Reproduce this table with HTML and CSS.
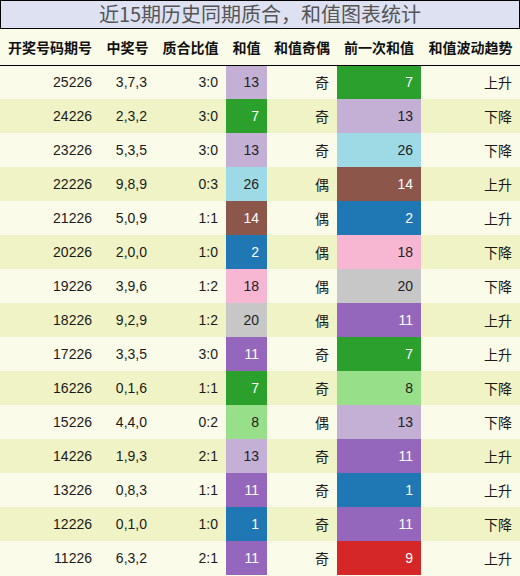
FILE: index.html
```html
<!DOCTYPE html>
<html lang="zh">

<head>
  <meta charset="UTF-8">
  <meta name="viewport" content="width=device-width, initial-scale=1.0">
  <title>和值图表统计</title>
  <link rel="stylesheet" href="styles.css">
</head>

<body>

  <div class="chart">
    <h2 class="chart-title">近15期历史同期质合，和值图表统计</h2>

    <table class="stats">
      <colgroup>
        <col class="w-issue">
        <col class="w-nums">
        <col class="w-ratio">
        <col class="w-sum">
        <col class="w-odd">
        <col class="w-prev">
        <col class="w-trend">
      </colgroup>
      <thead>
        <tr>
          <th>开奖号码期号</th>
          <th>中奖号</th>
          <th>质合比值</th>
          <th>和值</th>
          <th>和值奇偶</th>
          <th>前一次和值</th>
          <th>和值波动趋势</th>
        </tr>
      </thead>
      <tbody>
        <tr><td>25226</td><td>3,7,3</td><td>3:0</td><td class="c-lavender">13</td><td>奇</td><td class="c-green">7</td><td>上升</td></tr>
        <tr><td>24226</td><td>2,3,2</td><td>3:0</td><td class="c-green">7</td><td>奇</td><td class="c-lavender">13</td><td>下降</td></tr>
        <tr><td>23226</td><td>5,3,5</td><td>3:0</td><td class="c-lavender">13</td><td>奇</td><td class="c-sky">26</td><td>下降</td></tr>
        <tr><td>22226</td><td>9,8,9</td><td>0:3</td><td class="c-sky">26</td><td>偶</td><td class="c-brown">14</td><td>上升</td></tr>
        <tr><td>21226</td><td>5,0,9</td><td>1:1</td><td class="c-brown">14</td><td>偶</td><td class="c-blue">2</td><td>上升</td></tr>
        <tr><td>20226</td><td>2,0,0</td><td>1:0</td><td class="c-blue">2</td><td>偶</td><td class="c-pink">18</td><td>下降</td></tr>
        <tr><td>19226</td><td>3,9,6</td><td>1:2</td><td class="c-pink">18</td><td>偶</td><td class="c-grey">20</td><td>下降</td></tr>
        <tr><td>18226</td><td>9,2,9</td><td>1:2</td><td class="c-grey">20</td><td>偶</td><td class="c-purple">11</td><td>上升</td></tr>
        <tr><td>17226</td><td>3,3,5</td><td>3:0</td><td class="c-purple">11</td><td>奇</td><td class="c-green">7</td><td>上升</td></tr>
        <tr><td>16226</td><td>0,1,6</td><td>1:1</td><td class="c-green">7</td><td>奇</td><td class="c-lime">8</td><td>下降</td></tr>
        <tr><td>15226</td><td>4,4,0</td><td>0:2</td><td class="c-lime">8</td><td>偶</td><td class="c-lavender">13</td><td>下降</td></tr>
        <tr><td>14226</td><td>1,9,3</td><td>2:1</td><td class="c-lavender">13</td><td>奇</td><td class="c-purple">11</td><td>上升</td></tr>
        <tr><td>13226</td><td>0,8,3</td><td>1:1</td><td class="c-purple">11</td><td>奇</td><td class="c-blue">1</td><td>上升</td></tr>
        <tr><td>12226</td><td>0,1,0</td><td>1:0</td><td class="c-blue">1</td><td>奇</td><td class="c-purple">11</td><td>下降</td></tr>
        <tr><td>11226</td><td>6,3,2</td><td>2:1</td><td class="c-purple">11</td><td>奇</td><td class="c-red">9</td><td>上升</td></tr>
      </tbody>
    </table>
  </div>

</body>

</html>
```

FILE: styles.css
```css
* {
  margin: 0;
  padding: 0;
  box-sizing: border-box;
}

body {
  width: 520px;
  height: 576px;
  overflow: hidden;
  background: #fafbe9;
  font-family: "Liberation Sans", "Noto Sans CJK SC", sans-serif;
  color: #1a1a1a;
}

.chart {
  width: 520px;
}

.chart-title {
  height: 29px;
  border: 1px solid #000;
  background: #dde1f2;
  color: #555;
  font-family: "Noto Sans CJK SC", sans-serif;
  font-size: 20px;
  font-weight: normal;
  line-height: 26px;
  text-align: center;
}

.stats {
  width: 520px;
  border-collapse: collapse;
  table-layout: fixed;
}

.w-issue { width: 100px; }
.w-nums { width: 55px; }
.w-ratio { width: 71px; }
.w-sum { width: 41px; }
.w-odd { width: 70px; }
.w-prev { width: 84px; }
.w-trend { width: 99px; }

.stats th {
  height: 36px;
  border-bottom: 1px solid #000;
  background: #fafbe9;
  font-size: 14px;
  font-weight: bold;
  text-align: center;
  white-space: nowrap;
  color: #111;
}

.stats td {
  height: 34px;
  padding: 0 8px 0 0;
  font-size: 14px;
  text-align: right;
  white-space: nowrap;
}

.stats tbody tr:nth-child(odd) {
  background: #fafbe9;
}

.stats tbody tr:nth-child(even) {
  background: #eff3c5;
}

/* palette for the sum cells */
.stats td.c-lavender { background: #c5b0d5; color: #222; }
.stats td.c-green { background: #2ca02c; color: #fff; }
.stats td.c-sky { background: #9edae5; color: #222; }
.stats td.c-brown { background: #8c564b; color: #fff; }
.stats td.c-blue { background: #1f77b4; color: #fff; }
.stats td.c-pink { background: #f7b6d2; color: #222; }
.stats td.c-grey { background: #c7c7c7; color: #222; }
.stats td.c-purple { background: #9467bd; color: #fff; }
.stats td.c-lime { background: #98df8a; color: #222; }
.stats td.c-red { background: #d62728; color: #fff; }
```
